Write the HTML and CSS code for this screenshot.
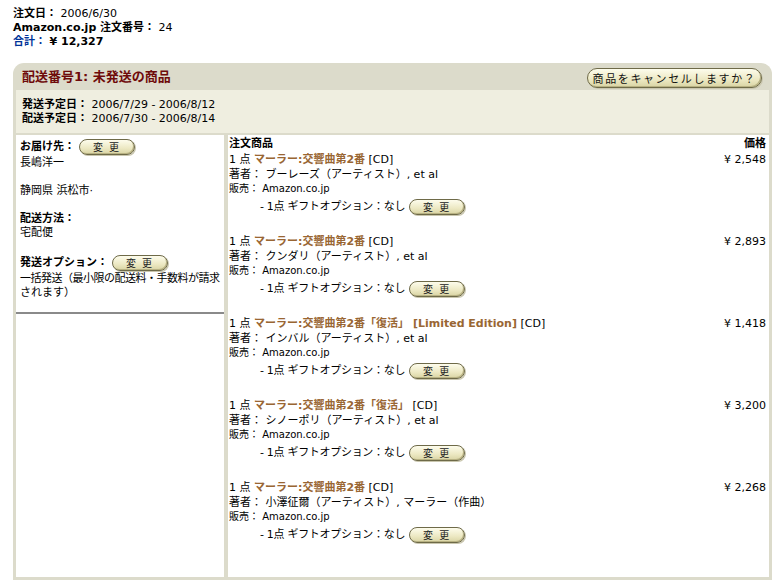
FILE: index.html
```html
<!DOCTYPE html>
<html lang="ja">
<head>
<meta charset="utf-8">
<title>注文内容</title>
<link rel="stylesheet" href="styles.css">
</head>
<body>
<div class="summary">
  <div><b>注文日：</b> 2006/6/30</div>
  <div><b>Amazon.co.jp 注文番号：</b> 24</div>
  <div><b class="blue">合計：</b> <b>¥ 12,327</b></div>
</div>

<div class="panel">
  <div class="panel-head">
    <h2 class="panel-title">配送番号1: 未発送の商品</h2>
    <button class="pill pill-lg">商品をキャンセルしますか？</button>
  </div>
  <div class="dates">
    <div><b>発送予定日：</b> 2006/7/29 - 2006/8/12</div>
    <div><b>配送予定日：</b> 2006/7/30 - 2006/8/14</div>
  </div>
  <div class="body">
    <div class="left">
      <div class="left-inner">
        <div class="label-row"><b>お届け先：</b><button class="pill">変 更</button></div>
        <div>長嶋洋一</div>
        <div class="gap">静岡県 浜松市·</div>
        <div class="gap"><b>配送方法：</b></div>
        <div>宅配便</div>
        <div class="label-row gap"><b>発送オプション：</b><button class="pill">変 更</button></div>
        <div class="tight">一括発送（最小限の配送料・手数料が請求</div>
        <div>されます）</div>
      </div>
    </div>
    <div class="right">
      <div class="items-head"><b>注文商品</b><b>価格</b></div>

      <div class="item">
        <div class="item-main">
          <div class="title-line">1 点 <a class="prod">マーラー:交響曲第2番</a> [CD]</div>
          <div class="line">著者： ブーレーズ（アーティスト）, et al</div>
          <div class="line seller">販売： Amazon.co.jp</div>
          <div class="gift">- 1点 ギフトオプション：なし<button class="pill">変 更</button></div>
        </div>
        <div class="price">¥ 2,548</div>
      </div>

      <div class="item">
        <div class="item-main">
          <div class="title-line">1 点 <a class="prod">マーラー:交響曲第2番</a> [CD]</div>
          <div class="line">著者： クンダリ（アーティスト）, et al</div>
          <div class="line seller">販売： Amazon.co.jp</div>
          <div class="gift">- 1点 ギフトオプション：なし<button class="pill">変 更</button></div>
        </div>
        <div class="price">¥ 2,893</div>
      </div>

      <div class="item">
        <div class="item-main">
          <div class="title-line">1 点 <a class="prod">マーラー:交響曲第2番「復活」 [Limited Edition]</a> [CD]</div>
          <div class="line">著者： インバル（アーティスト）, et al</div>
          <div class="line seller">販売： Amazon.co.jp</div>
          <div class="gift">- 1点 ギフトオプション：なし<button class="pill">変 更</button></div>
        </div>
        <div class="price">¥ 1,418</div>
      </div>

      <div class="item">
        <div class="item-main">
          <div class="title-line">1 点 <a class="prod">マーラー:交響曲第2番「復活」</a> [CD]</div>
          <div class="line">著者： シノーポリ（アーティスト）, et al</div>
          <div class="line seller">販売： Amazon.co.jp</div>
          <div class="gift">- 1点 ギフトオプション：なし<button class="pill">変 更</button></div>
        </div>
        <div class="price">¥ 3,200</div>
      </div>

      <div class="item">
        <div class="item-main">
          <div class="title-line">1 点 <a class="prod">マーラー:交響曲第2番</a> [CD]</div>
          <div class="line">著者： 小澤征爾（アーティスト）, マーラー（作曲）</div>
          <div class="line seller">販売： Amazon.co.jp</div>
          <div class="gift">- 1点 ギフトオプション：なし<button class="pill">変 更</button></div>
        </div>
        <div class="price">¥ 2,268</div>
      </div>
    </div>
  </div>
</div>
</body>
</html>
```

FILE: styles.css
```css
html, body {
  margin: 0;
  padding: 0;
  background: #ffffff;
}
body {
  padding: 7px 10px 0 13px;
  font-family: "DejaVu Sans", "Noto Sans CJK JP", sans-serif;
  font-size: 11px;
  line-height: 14px;
  color: #000;
}
b { font-weight: bold; }
.blue { color: #003399; }

.summary { margin-bottom: 14px; }

.panel {
  width: 759px;
  box-sizing: border-box;
  background: #dcdbcb;
  border-radius: 11px 11px 0 0;
  padding: 0 3px 3px 3px;
}
.panel-head {
  height: 27px;
  display: flex;
  align-items: center;
  justify-content: space-between;
  padding: 0 7px 0 6px;
}
.panel-title {
  margin: 0;
  font-size: 13px;
  line-height: 16px;
  font-weight: bold;
  color: #6e0a0a;
}
.dates {
  background: #efeee0;
  padding: 8px 6px 7px 6px;
  margin-bottom: 2px;
}

.pill {
  display: inline-flex;
  align-items: center;
  justify-content: center;
  box-sizing: border-box;
  width: 56px;
  height: 16px;
  padding: 0 0 1px 0;
  margin: 0;
  border: 1px solid #6e6a48;
  border-radius: 9px;
  background: linear-gradient(#fdfcec, #ece8c2 60%, #d9d4a4);
  box-shadow: inset -1px -1px 0 #b8b283, 1px 1px 0 #c9c6ae;
  font-family: "Noto Sans CJK JP", sans-serif;
  font-size: 10px;
  line-height: 12px;
  letter-spacing: 2px;
  color: #222;
}
.pill-lg {
  width: 175px;
  height: 20px;
  border-radius: 10px;
  margin-top: 3px;
  font-size: 11px;
  letter-spacing: 1.6px;
  color: #111;
}

.body {
  display: grid;
  grid-template-columns: 208px 1fr;
  column-gap: 4px;
  height: 442px;
}
.left, .right {
  background: #ffffff;
}
.left { padding-top: 3px; }
.left-inner {
  padding: 0 2px 12px 4px;
  border-bottom: 2px solid #8a8a8a;
}
.label-row {
  display: flex;
  align-items: center;
  gap: 4px;
  height: 18px;
}
.gap { margin-top: 14px; }
.tight {
  white-space: nowrap;
  letter-spacing: -0.5px;
}

.right {
  padding: 2px 3px 0 1px;
}
.items-head {
  display: flex;
  justify-content: space-between;
  height: 14px;
  margin-bottom: 1px;
}
.item {
  display: flex;
  justify-content: space-between;
  margin-bottom: 16px;
}
.title-line { line-height: 16px; }
.prod {
  color: #996633;
  font-weight: bold;
}
.line { line-height: 14px; }
.seller { font-size: 10px; }
.gift {
  display: flex;
  align-items: center;
  height: 22px;
  padding-left: 31px;
  letter-spacing: -0.3px;
}
.gift .pill { margin-left: 4px; }
.price { line-height: 16px; }
```
